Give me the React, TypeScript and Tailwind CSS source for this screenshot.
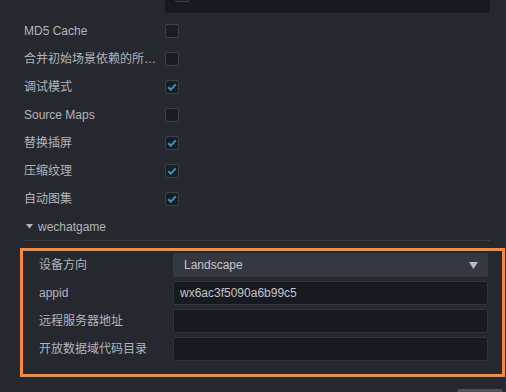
import React from "react";

const FONT = { fontFamily: '"Liberation Sans", "Noto Sans CJK SC", sans-serif' };

function Check({ checked }: { checked?: boolean }) {
  return (
    <div className="w-[14px] h-[14px] rounded-[2px] border border-[#3d4049] bg-[#1b1d24] flex items-center justify-center">
      {checked && (
        <svg width="10" height="8" viewBox="0 0 10 8">
          <path d="M1.2 4.2 L3.8 6.6 L8.8 1.4" fill="none" stroke="#3496c6" strokeWidth="2" />
        </svg>
      )}
    </div>
  );
}

const ROWS: { label: string; checked: boolean }[] = [
  { label: "MD5 Cache", checked: false },
  { label: "合并初始场景依赖的所有JSON", checked: false },
  { label: "调试模式", checked: true },
  { label: "Source Maps", checked: false },
  { label: "替换插屏", checked: true },
  { label: "压缩纹理", checked: true },
  { label: "自动图集", checked: true },
];

function TextInput({ value }: { value?: string }) {
  return (
    <div className="flex-1 h-[24px] bg-[#181a21] border border-[#30333a] rounded-[2px] flex items-center px-[6px] text-[12px] text-[#c4c6cb]">
      {value}
    </div>
  );
}

export default function App() {
  return (
    <div
      className="w-[506px] h-[392px] overflow-hidden bg-[#262830] border-r border-[#2e3037] text-[12px] text-[#b3b5bb]"
      style={FONT}
    >
      <div className="ml-[165px] w-[325px] h-[13px] overflow-hidden rounded-b-[3px] bg-[#181a21]">
        <div className="-mt-[12px] ml-[10px] flex items-center gap-[6px] h-[14px]">
          <Check checked />
          <span className="text-[#c4c6cb]">db://assets/resources/textures/scenes</span>
        </div>
      </div>

      <div className="mt-[4px]">
        {ROWS.map((r) => (
          <div key={r.label} className="h-[28px] flex items-center pl-[24px]">
            <div className="w-[141px] pr-[8px] truncate">{r.label}</div>
            <Check checked={r.checked} />
          </div>
        ))}
        <div className="h-[27px] flex items-center pl-[26px] gap-[5px]">
          <svg width="7" height="5" viewBox="0 0 7 5">
            <path d="M0 0 L7 0 L3.5 4.5 Z" fill="#b3b5bb" />
          </svg>
          <span>wechatgame</span>
        </div>
        <div className="ml-[24px] mr-[15px] h-px bg-[#3a3d45]" />
      </div>

      <div className="mt-[7px] ml-[20px] w-[485px] border-[3px] border-[#fa8a38] pl-[16px] pr-[14px] pb-[11px]">
        <div className="h-[28px] flex items-center">
          <div className="w-[134px]">设备方向</div>
          <div className="flex-1 h-[24px] bg-[#353842] rounded-[2px] flex items-center justify-between pl-[11px] pr-[10px] text-[#c4c6cb]">
            <span>Landscape</span>
            <svg width="9" height="7" viewBox="0 0 9 7">
              <path d="M0 0 L9 0 L4.5 7 Z" fill="#b8bac0" />
            </svg>
          </div>
        </div>
        <div className="h-[28px] flex items-center">
          <div className="w-[134px]">appid</div>
          <TextInput value="wx6ac3f5090a6b99c5" />
        </div>
        <div className="h-[28px] flex items-center">
          <div className="w-[134px]">远程服务器地址</div>
          <TextInput />
        </div>
        <div className="h-[28px] flex items-center">
          <div className="w-[134px]">开放数据域代码目录</div>
          <TextInput />
        </div>
      </div>

      <div className="mt-[12px] flex justify-end pr-[2px]">
        <div className="w-[46px] h-[20px] rounded-[3px] bg-[#4f5158]" />
      </div>
    </div>
  );
}
